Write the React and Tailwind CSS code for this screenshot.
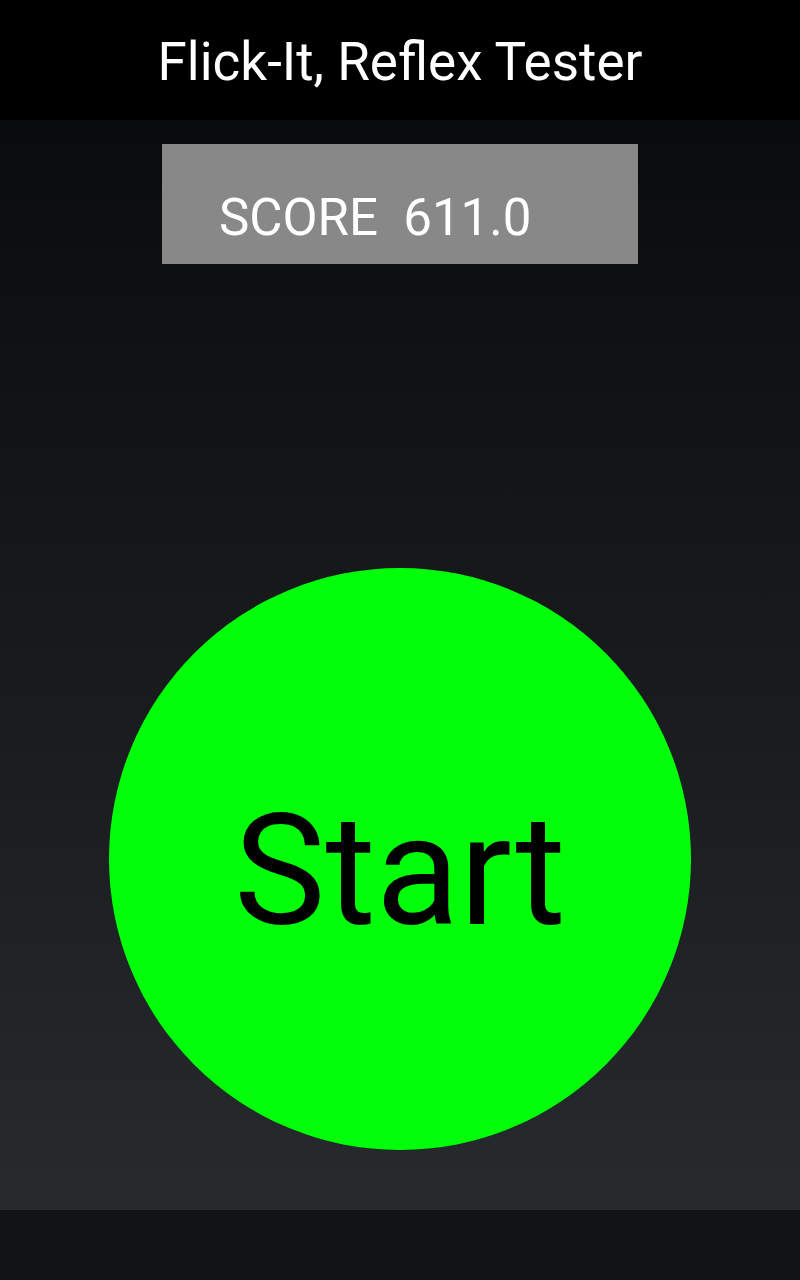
export default function App() {
  return (
    <div
      className="w-[800px] h-[1280px] flex flex-col overflow-hidden"
      style={{ fontFamily: "Roboto, 'Noto Sans', sans-serif" }}
    >
      {/* title bar */}
      <div className="h-[120px] shrink-0 bg-black pt-[36px] text-center text-white text-[53px] leading-[52px]">
        Flick-It, Reflex Tester
      </div>

      {/* game area */}
      <div className="flex-1 flex flex-col items-center bg-gradient-to-b from-[#0a0b0c] to-[#272b2e]">
        <div className="mt-[24px] w-[476px] h-[120px] bg-[#888888] pt-[48px] pl-[57px] text-white text-[51px] leading-[51px] whitespace-pre">
          {"SCORE  611.0"}
        </div>

        <button className="mt-[304px] w-[582px] h-[582px] rounded-full bg-[#00ff08] flex items-center justify-center pt-[26px] text-black text-[154px] leading-[154px]">
          Start
        </button>
      </div>

      {/* nav bar */}
      <div className="h-[70px] shrink-0 bg-[#111417]" />
    </div>
  );
}
